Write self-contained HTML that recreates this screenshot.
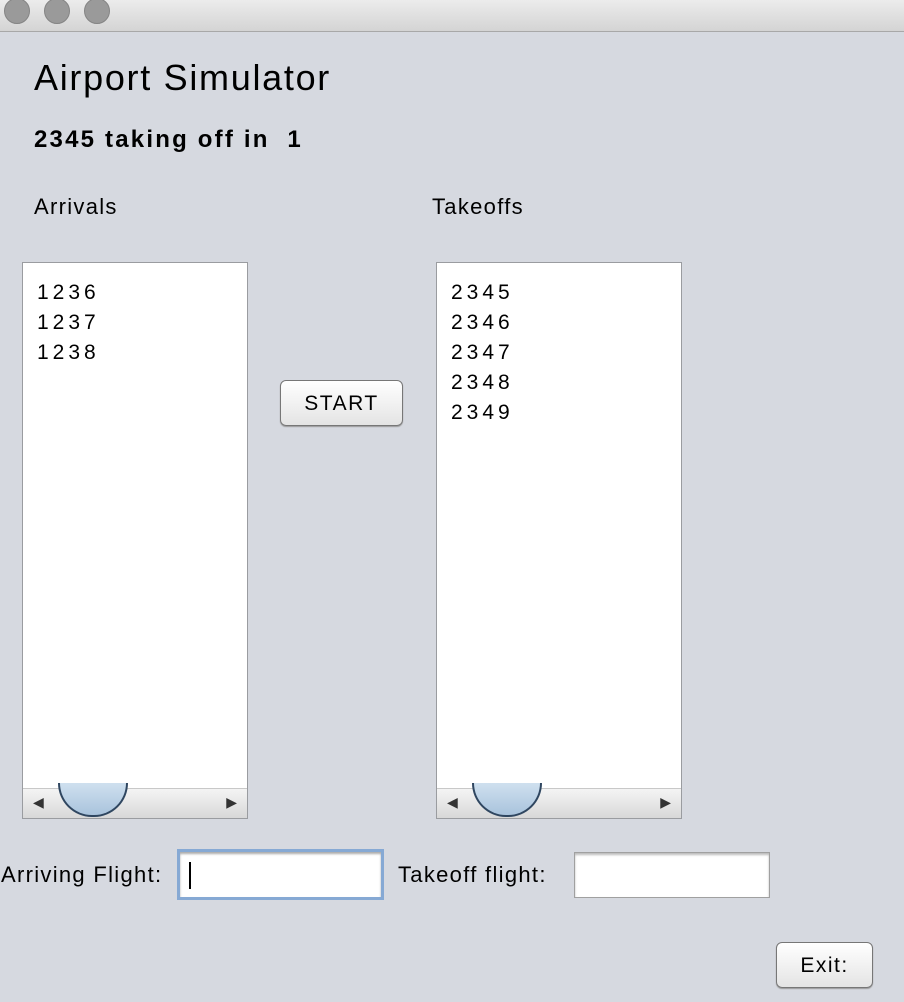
<!DOCTYPE html>
<html><head><style>
body{margin:0;width:904px;height:1002px;background:#d6d9e0;position:relative;overflow:hidden;font-family:"Liberation Sans",sans-serif;color:#000}
.a{position:absolute}
.tb{left:0;top:0;width:904px;height:31px;background:linear-gradient(#ececec,#d4d4d4);border-bottom:1px solid #a8a8a8}
.dot{width:24px;height:24px;border-radius:50%;background:#9a9a9a;border:1px solid #858585;top:-2px}
.list{background:#fff;border:1px solid #9a9ca0;box-sizing:border-box}
.list .it{position:absolute;left:14px;top:15px;font-size:21px;line-height:30px;letter-spacing:4px}
.sb{left:0;bottom:0;width:100%;height:29px;background:linear-gradient(#f4f4f4,#d8d8d8);border-top:1px solid #c8c8c8}
.th{left:35px;top:-6px;width:70px;height:34px;border-radius:0 0 35px 35px;border:2px solid #2f4660;border-top:none;background:linear-gradient(#cfe0ef,#a9c3dc);box-sizing:border-box}
.btn{border:1px solid #777;border-radius:6px;background:linear-gradient(#fff,#e4e4e4);box-sizing:border-box;font-size:21px;text-align:center;box-shadow:0 1px 1px #999;letter-spacing:1.5px}
.lbl{font-size:22px;letter-spacing:1.3px}
</style></head><body>
<div class="a tb"></div>
<div class="a dot" style="left:4px"></div>
<div class="a dot" style="left:44px"></div>
<div class="a dot" style="left:84px"></div>
<div class="a" style="left:34px;top:57px;font-size:36px;letter-spacing:1.7px">Airport Simulator</div>
<div class="a" style="left:34px;top:126px;font-size:24px;font-weight:bold;letter-spacing:2.2px">2345 taking off in&nbsp; 1</div>
<div class="a lbl" style="left:34px;top:194px">Arrivals</div>
<div class="a lbl" style="left:432px;top:194px">Takeoffs</div>
<div class="a list" style="left:22px;top:262px;width:226px;height:557px">
<div class="it">1236<br>1237<br>1238</div>
<div class="a sb"><div class="a th"></div><div class="a" style="left:10px;top:5px;font-size:14px;color:#333">◀</div><div class="a" style="right:10px;top:5px;font-size:14px;color:#333">▶</div></div>
</div>
<div class="a list" style="left:436px;top:262px;width:246px;height:557px">
<div class="it">2345<br>2346<br>2347<br>2348<br>2349</div>
<div class="a sb"><div class="a th"></div><div class="a" style="left:10px;top:5px;font-size:14px;color:#333">◀</div><div class="a" style="right:10px;top:5px;font-size:14px;color:#333">▶</div></div>
</div>
<div class="a btn" style="left:280px;top:380px;width:123px;height:46px;line-height:46px">START</div>
<div class="a lbl" style="left:1px;top:862px">Arriving Flight:</div>
<div class="a" style="left:177px;top:849px;width:207px;height:51px;background:#fff;border:3px solid #86a9d4;box-sizing:border-box;box-shadow:inset 0 2px 2px #aaa"><div class="a" style="left:9px;top:10px;width:2px;height:27px;background:#000"></div></div>
<div class="a lbl" style="left:398px;top:862px">Takeoff flight:</div>
<div class="a" style="left:574px;top:852px;width:196px;height:46px;background:#fff;border:1px solid #a0a0a0;box-sizing:border-box;box-shadow:inset 0 2px 2px #bbb"></div>
<div class="a btn" style="left:776px;top:942px;width:97px;height:46px;line-height:46px">Exit:</div>
</body></html>
